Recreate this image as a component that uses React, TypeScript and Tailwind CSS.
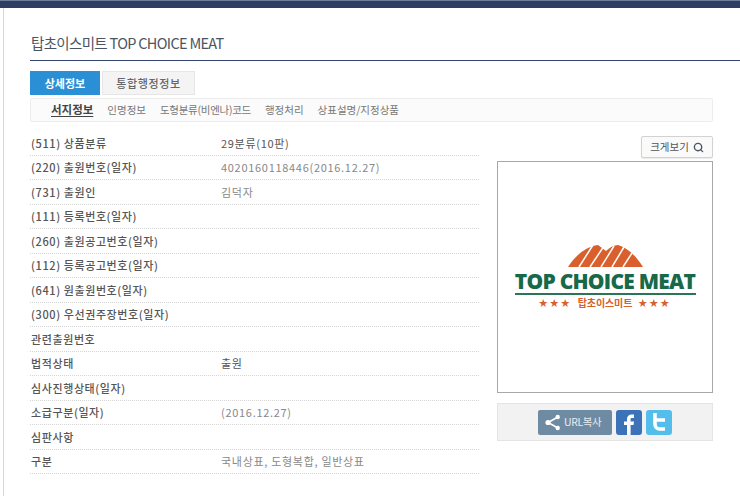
import React from "react";
import { Search } from "lucide-react";

const rows: [string, string, boolean?][] = [
  ["(511) 상품분류", "29분류(10판)", true],
  ["(220) 출원번호(일자)", "4020160118446(2016.12.27)"],
  ["(731) 출원인", "김덕자"],
  ["(111) 등록번호(일자)", ""],
  ["(260) 출원공고번호(일자)", ""],
  ["(112) 등록공고번호(일자)", ""],
  ["(641) 원출원번호(일자)", ""],
  ["(300) 우선권주장번호(일자)", ""],
  ["관련출원번호", ""],
  ["법적상태", "출원", true],
  ["심사진행상태(일자)", ""],
  ["소급구분(일자)", "(2016.12.27)"],
  ["심판사항", ""],
  ["구분", "국내상표, 도형복합, 일반상표"],
];

const font = "font-['Noto_Sans_CJK_KR','Liberation_Sans',sans-serif]";

function Logo() {
  return (
    <div className="flex w-[184px] flex-col items-center">
      <svg width="75" height="23" viewBox="0 0 75 23">
        <path d="M0 23 C7 12 17 3 30 1 L38 7 C42 3 46 1 50 1 C60 4 68 12 75 23 Z" fill="#d9602c" />
        <g stroke="#fff" strokeWidth="1.5">
          <path d="M11 23 L25 1" />
          <path d="M22 23 L36 2" />
          <path d="M33 23 L46 2" />
          <path d="M44 23 L56 3" />
          <path d="M55 23 L64 9" />
        </g>
      </svg>
      <div className="mt-[3px] whitespace-nowrap font-['Open_Sans','Liberation_Sans',sans-serif] text-[21px] leading-[23px] font-extrabold tracking-[-0.75px] text-[#17694a]">
        TOP CHOICE MEAT
      </div>
      <div className="h-[2px] w-[181px] bg-[#2b7555]" />
      <div className={`mt-[1px] flex items-center gap-[6px] text-[10px] leading-[14px] font-bold text-[#d9602c] ${font}`}>
        <span className="text-[9px] tracking-[2px]">★★★</span>
        <span className="tracking-[-0.1px]">탑초이스미트</span>
        <span className="text-[9px] tracking-[2px]">★★★</span>
      </div>
    </div>
  );
}

export default function App() {
  return (
    <div className={`h-[496px] w-[740px] overflow-hidden bg-white ${font}`}>
      <div className="h-2 border-t border-[#6f7f97] bg-[#2c3e63]" />
      <div className="h-[488px] border-l-[3px] border-l-white">
        <div className="h-full border-l border-l-[#d8d8d8] pl-[26px]">
          <h1 className="flex h-[52px] items-end pb-[10px] pl-[1px] text-[14.5px] leading-none tracking-[-0.68px] text-[#4a5563]">
            탑초이스미트 TOP CHOICE MEAT
          </h1>
          <div className="h-[1px] bg-[#33456e]" />
          <div className="mt-[10px] flex h-[24px] gap-[2px] text-[11px]">
            <div className="flex w-[70px] items-center justify-center bg-[#2b8fd6] font-bold text-white">상세정보</div>
            <div className="flex w-[93px] items-center justify-center border border-[#e6e6e6] bg-[#f4f4f4] font-medium tracking-[0.6px] text-[#666]">통합행정정보</div>
          </div>
          <div className="mt-[3px] flex h-[24px] w-[683px] items-center rounded-[2px] border border-[#ececec] bg-[#fbfbfb] pl-[20px] text-[10.5px] text-[#777]">
            <span className="mr-[14px] text-[11.5px] font-bold text-[#444] underline underline-offset-2">서지정보</span>
            <span className="mr-[14px]">인명정보</span>
            <span className="mr-[14px] tracking-[-0.28px]">도형분류(비엔나)코드</span>
            <span className="mr-[14px]">행정처리</span>
            <span>상표설명/지정상품</span>
          </div>
          <div className="mt-[9px] flex">
            <div className="w-[449px]">
              {rows.map(([label, value, strong]) => (
                <div key={label} className="flex h-[24.5px] items-center border-b border-dotted border-b-[#d5d5d5] pl-[1px] text-[11px]">
                  <div className="w-[190px] font-medium tracking-[0.6px] text-[#555]">{label}</div>
                  <div className={`tracking-[0.7px] ${strong ? "text-[#555]" : "text-[#888]"}`}>{value}</div>
                </div>
              ))}
            </div>
            <div className="ml-[18px] w-[216px] pt-[5px]">
              <div className="flex justify-end">
                <div className="flex h-[22px] w-[72px] items-center justify-center gap-[4px] rounded-[2px] border border-[#d2d2d2] bg-[#fafafa] text-[10.5px] text-[#555] shadow-[0_1px_1px_rgba(0,0,0,0.08)]">
                  크게보기
                  <Search size={11} strokeWidth={3} className="text-[#4a5563]" />
                </div>
              </div>
              <div className="mt-[3px] flex h-[232px] items-center justify-center border border-[#a8a8a8] bg-white">
                <Logo />
              </div>
              <div className="mt-[10px] flex h-[38px] items-center justify-center gap-[4px] border border-[#e4e4e4] bg-[#f2f2f2]">
                <div className="flex h-[25px] w-[74px] items-center gap-[3px] rounded-[2px] bg-[#6f8ba3] pl-[7px] text-[10.5px] tracking-[-0.4px] text-[#e6ecf1]">
                  <svg width="16" height="17" viewBox="0 0 16 17" fill="#fff" stroke="#fff">
                    <path d="M13 3 L3 8.5 L13 14" fill="none" strokeWidth="1.6" />
                    <circle cx="12.7" cy="3" r="2.2" stroke="none" />
                    <circle cx="3" cy="8.5" r="2.6" stroke="none" />
                    <circle cx="12.7" cy="14" r="2.2" stroke="none" />
                  </svg>
                  URL복사
                </div>
                <div className="flex h-[25px] w-[26px] items-end justify-center rounded-[3px] bg-[#3b72b8]">
                  <svg width="12" height="21" viewBox="0 0 12 21" fill="#fff">
                    <path d="M4 21 V11 H1 V7.5 H4 V5 C4 2 6 .5 8.5 .5 H11 V4 H9 C8 4 7.6 4.5 7.6 5.3 V7.5 H11 L10.5 11 H7.6 V21 Z" />
                  </svg>
                </div>
                <div className="flex h-[25px] w-[26px] items-center justify-center rounded-[3px] bg-[#53bdec]">
                  <svg width="14" height="18" viewBox="0 0 14 18" fill="none" stroke="#fff" strokeWidth="3.6">
                    <path d="M3 0 V11 C3 14 5 16 7.5 16 H13 M3 7 H13" />
                  </svg>
                </div>
              </div>
            </div>
          </div>
        </div>
      </div>
    </div>
  );
}
